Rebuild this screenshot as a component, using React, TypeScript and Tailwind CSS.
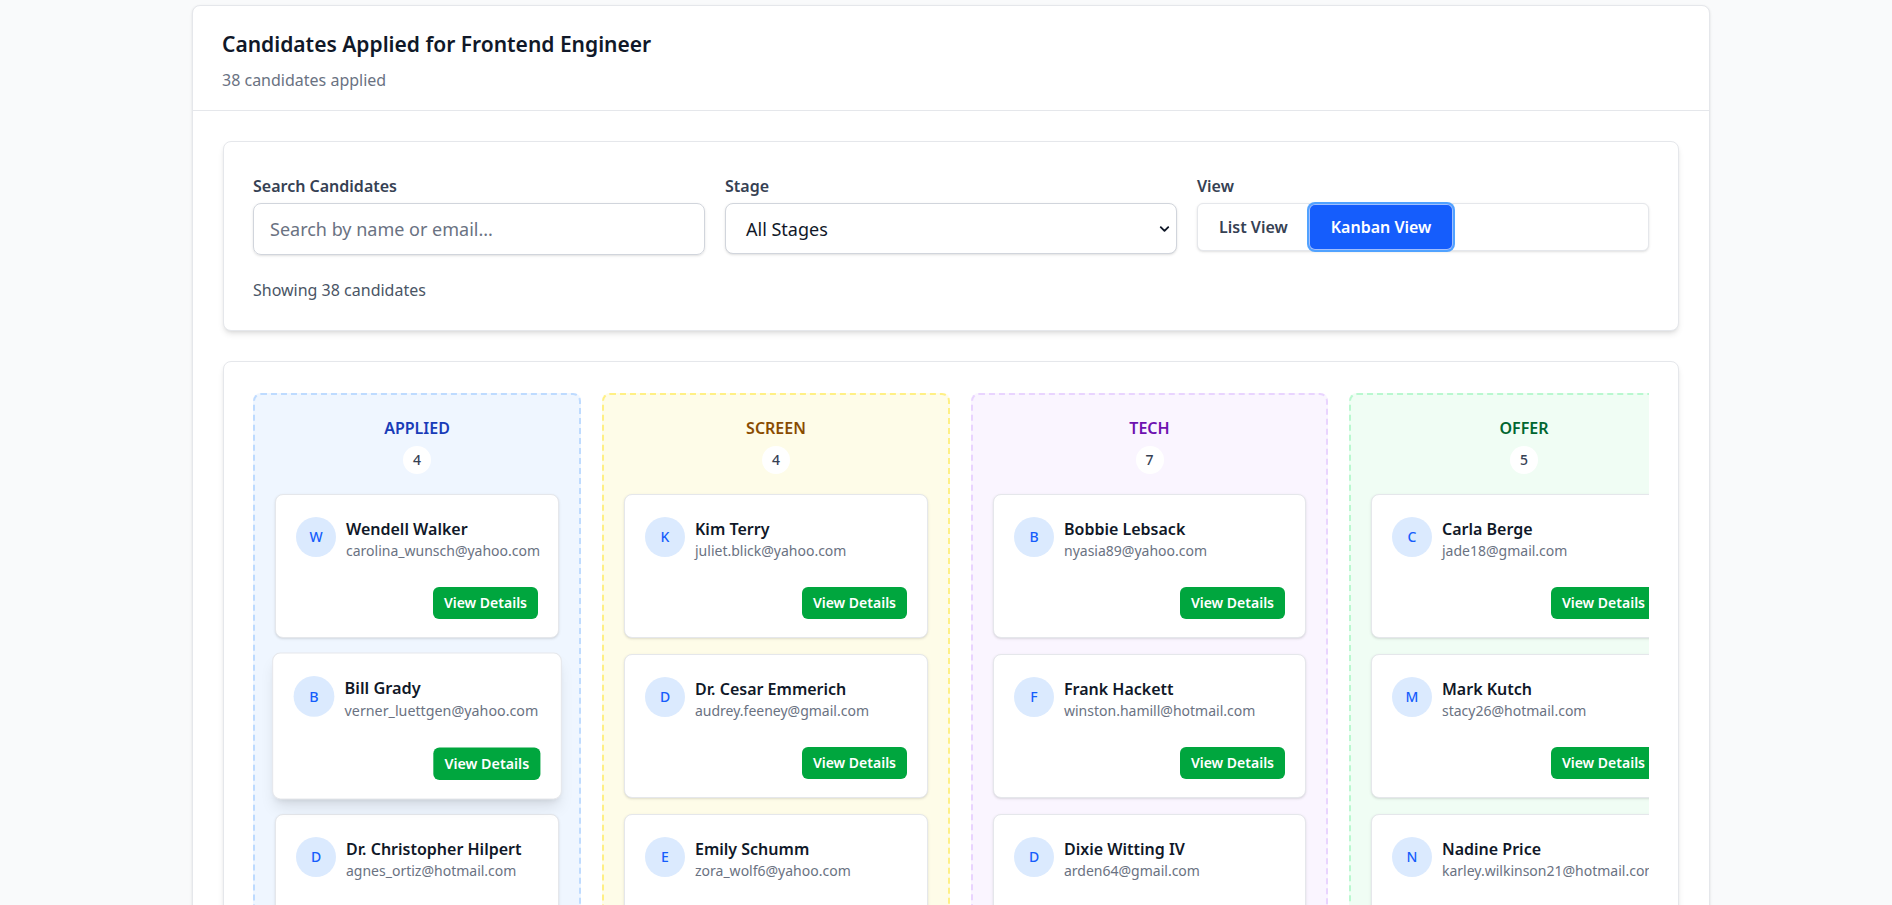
import { ChevronDown } from "lucide-react";

type Candidate = { name: string; email: string };

type Column = {
  title: string;
  width: string;
  box: string;
  heading: string;
  items: Candidate[];
};

const columns: Column[] = [
  {
    title: "APPLIED",
    width: "w-[328px]",
    box: "bg-blue-50 border-blue-200",
    heading: "text-blue-800",
    items: [
      { name: "Wendell Walker", email: "carolina_wunsch@yahoo.com" },
      { name: "Bill Grady", email: "verner_luettgen@yahoo.com" },
      { name: "Dr. Christopher Hilpert", email: "agnes_ortiz@hotmail.com" },
      { name: "Lela Gislason", email: "maurine.ryan@gmail.com" },
    ],
  },
  {
    title: "SCREEN",
    width: "w-[348px]",
    box: "bg-yellow-50 border-yellow-200",
    heading: "text-yellow-800",
    items: [
      { name: "Kim Terry", email: "juliet.blick@yahoo.com" },
      { name: "Dr. Cesar Emmerich", email: "audrey.feeney@gmail.com" },
      { name: "Emily Schumm", email: "zora_wolf6@yahoo.com" },
      { name: "Rosemary Bartoletti", email: "kennith.mcdermott@hotmail.com" },
    ],
  },
  {
    title: "TECH",
    width: "w-[357px]",
    box: "bg-purple-50 border-purple-200",
    heading: "text-purple-800",
    items: [
      { name: "Bobbie Lebsack", email: "nyasia89@yahoo.com" },
      { name: "Frank Hackett", email: "winston.hamill@hotmail.com" },
      { name: "Dixie Witting IV", email: "arden64@gmail.com" },
      { name: "Jana Kshlerin", email: "tremaine.oconnell@gmail.com" },
      { name: "Otis Beahan", email: "destini_kuhic@yahoo.com" },
      { name: "Marcia Nader", email: "gilberto.hahn44@hotmail.com" },
      { name: "Leroy Bogan", email: "lurline_kunze@gmail.com" },
    ],
  },
  {
    title: "OFFER",
    width: "w-[350px]",
    box: "bg-green-50 border-green-200",
    heading: "text-green-800",
    items: [
      { name: "Carla Berge", email: "jade18@gmail.com" },
      { name: "Mark Kutch", email: "stacy26@hotmail.com" },
      { name: "Nadine Price", email: "karley.wilkinson21@hotmail.com" },
      { name: "Ivan Mertz", email: "amya_stokes@yahoo.com" },
      { name: "Gwen Rolfson", email: "hermina90@gmail.com" },
    ],
  },
  {
    title: "HIRED",
    width: "w-[340px]",
    box: "bg-emerald-50 border-emerald-200",
    heading: "text-emerald-800",
    items: [
      { name: "Sally Hane", email: "bettye.lind@gmail.com" },
      { name: "Ross Feest", email: "ila_boehm@yahoo.com" },
    ],
  },
];

const CandidateCard = ({ c, hovered }: { c: Candidate; hovered?: boolean }) => {
  return (
    <div
      className={
        hovered
          ? "bg-white rounded-lg border border-gray-200 px-5 pt-[22px] pb-[18px] shadow-lg scale-[1.02]"
          : "bg-white rounded-lg border border-gray-200 px-5 pt-[22px] pb-[18px] shadow-sm"
      }
    >
      <div className="flex items-start gap-2.5">
        <div className="w-10 h-10 shrink-0 rounded-full bg-blue-100 text-blue-600 text-sm font-medium flex items-center justify-center">
          {c.name.replace("Dr. ", "D").charAt(0)}
        </div>
        <div className="min-w-0">
          <div className="text-base leading-6 font-semibold text-gray-900 whitespace-nowrap">{c.name}</div>
          <div className="text-sm leading-5 text-gray-500 whitespace-nowrap">{c.email}</div>
        </div>
      </div>
      <div className="flex justify-end mt-[26px]">
        <button className="bg-green-600 text-white text-sm font-semibold px-[11px] py-1.5 rounded-md whitespace-nowrap">
          View Details
        </button>
      </div>
    </div>
  );
};

const App = () => {
  return (
    <div
      className="min-h-screen bg-gray-50 pl-[192px] pt-[5px]"
      style={{ fontFamily: '"Noto Sans", "Open Sans", Arial, sans-serif' }}
    >
      <div className="w-[1518px] bg-white rounded-lg border border-gray-200 shadow-sm">
        {/* header */}
        <div className="px-[29px] pt-[24px] pb-[18px] border-b border-gray-200">
          <h1 className="text-[21px] leading-7 font-semibold text-gray-900">
            Candidates Applied for Frontend Engineer
          </h1>
          <p className="mt-[10px] text-base leading-6 text-gray-500">38 candidates applied</p>
        </div>

        <div className="px-[30px] pt-[30px] pb-8">
          {/* filters */}
          <div className="bg-white rounded-lg border border-gray-200 shadow-md px-[29px] pt-8 pb-7">
            <div className="grid grid-cols-3 gap-5">
              <div>
                <label className="block text-base leading-6 font-semibold text-gray-700 mb-[5px]">
                  Search Candidates
                </label>
                <input
                  placeholder="Search by name or email..."
                  className="w-full h-[52px] px-4 text-lg border border-gray-300 rounded-lg shadow-sm placeholder:text-gray-500 outline-none"
                />
              </div>
              <div>
                <label className="block text-base leading-6 font-semibold text-gray-700 mb-[5px]">Stage</label>
                <div className="relative">
                  <div className="w-full h-[51px] pl-5 pr-10 flex items-center text-lg text-gray-900 border border-gray-300 rounded-lg shadow-sm bg-white">
                    All Stages
                  </div>
                  <ChevronDown
                    size={15}
                    strokeWidth={3}
                    className="absolute right-[3px] top-1/2 -translate-y-1/2 mr-[2px] text-gray-900 pointer-events-none"
                  />
                </div>
              </div>
              <div>
                <label className="block text-base leading-6 font-semibold text-gray-700 mb-[5px]">View</label>
                <div className="flex h-[48px] bg-white border border-gray-200 rounded-md shadow-sm">
                  <button className="px-[21px] text-base font-semibold text-gray-700">List View</button>
                  <button className="px-[22px] text-base font-semibold text-white bg-blue-600 rounded-md ring-2 ring-blue-400 inset-ring inset-ring-white/60">
                    Kanban View
                  </button>
                </div>
              </div>
            </div>
            <p className="mt-[23px] text-base leading-6 text-gray-600">Showing 38 candidates</p>
          </div>

          {/* kanban */}
          <div className="mt-[30px] bg-white rounded-lg border border-gray-200 shadow-md px-[29px] pt-[31px] pb-[30px]">
            <div className="flex gap-[21px] overflow-x-auto pb-2">
              {columns.map((col) => (
                <div
                  key={col.title}
                  className={`${col.width} shrink-0 rounded-lg border-2 border-dashed p-5 ${col.box}`}
                >
                  <div className="text-center pt-px">
                    <h3 className={`text-base leading-6 font-semibold ${col.heading}`}>{col.title}</h3>
                    <span className="mt-1.5 inline-flex w-7 h-7 rounded-full bg-white items-center justify-center text-sm font-medium text-gray-700">
                      {col.items.length}
                    </span>
                  </div>
                  <div className="mt-[20px] flex flex-col gap-4">
                    {col.items.map((c, i) => (
                      <CandidateCard key={c.email} c={c} hovered={col.title === "APPLIED" && i === 1} />
                    ))}
                  </div>
                </div>
              ))}
            </div>
          </div>
        </div>
      </div>
    </div>
  );
};

export default App;
